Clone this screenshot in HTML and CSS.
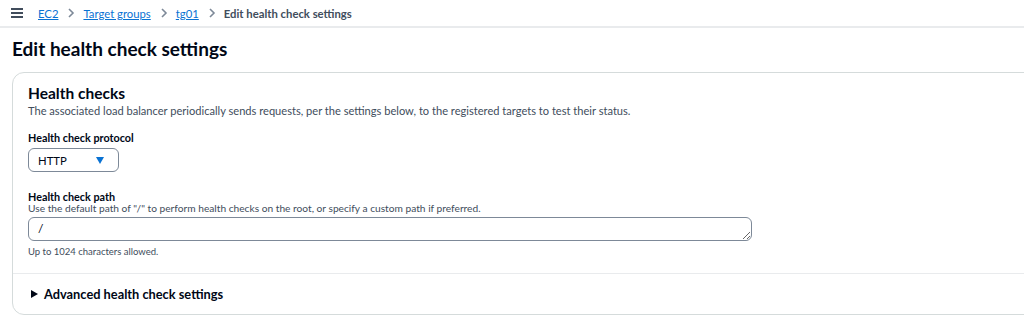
FILE: index.html
```html
<!DOCTYPE html>
<html lang="en">
<head>
    <meta charset="UTF-8">
    <meta name="viewport" content="width=device-width, initial-scale=1.0">
    <title>Edit health check settings</title>
    <link rel="stylesheet" href="styles.css">
</head>
<body>
    <div class="topbar">
        <button class="menu-btn" aria-label="Open navigation">
            <svg width="12" height="10" viewBox="0 0 12 10">
                <rect x="0" y="0" width="12" height="2" fill="#414d5c"/>
                <rect x="0" y="4" width="12" height="2" fill="#414d5c"/>
                <rect x="0" y="8" width="12" height="2" fill="#414d5c"/>
            </svg>
        </button>
        <nav class="breadcrumbs">
            <a href="#">EC2</a>
            <span class="sep"><svg width="8" height="10" viewBox="0 0 8 10"><path d="M2 1l4 4-4 4" fill="none" stroke="#7d8998" stroke-width="1.6"/></svg></span>
            <a href="#">Target groups</a>
            <span class="sep"><svg width="8" height="10" viewBox="0 0 8 10"><path d="M2 1l4 4-4 4" fill="none" stroke="#7d8998" stroke-width="1.6"/></svg></span>
            <a href="#">tg01</a>
            <span class="sep"><svg width="8" height="10" viewBox="0 0 8 10"><path d="M2 1l4 4-4 4" fill="none" stroke="#7d8998" stroke-width="1.6"/></svg></span>
            <span class="current">Edit health check settings</span>
        </nav>
    </div>

    <main class="content">
        <h1>Edit health check settings</h1>

        <section class="panel">
            <div class="panel-body">
                <h2>Health checks</h2>
                <p class="panel-desc">The associated load balancer periodically sends requests, per the settings below, to the registered targets to test their status.</p>

                <div class="field">
                    <label class="field-label">Health check protocol</label>
                    <div class="select">
                        <span>HTTP</span>
                        <svg width="8" height="7" viewBox="0 0 8 7"><path d="M0 0h8L4 7z" fill="#0972d3"/></svg>
                    </div>
                </div>

                <div class="field">
                    <label class="field-label">Health check path</label>
                    <div class="field-desc">Use the default path of "/" to perform health checks on the root, or specify a custom path if preferred.</div>
                    <textarea class="path-input" rows="1">/</textarea>
                    <div class="field-hint">Up to 1024 characters allowed.</div>
                </div>
            </div>

            <div class="panel-footer">
                <svg width="7" height="8" viewBox="0 0 7 8"><path d="M0 0l7 4L0 8z" fill="#000716"/></svg>
                <span>Advanced health check settings</span>
            </div>
        </section>
    </main>
</body>
</html>
```

FILE: styles.css
```css
body {
    margin: 0;
    font-family: Lato, Arial, sans-serif;
    color: #000716;
    background: #ffffff;
    overflow: hidden;
}

.topbar {
    display: flex;
    align-items: center;
    height: 26px;
    padding-left: 11px;
    border-bottom: 2px solid #e9ebed;
}

.menu-btn {
    background: none;
    border: none;
    padding: 0;
    margin-right: 15px;
    display: flex;
    align-items: center;
}

.breadcrumbs {
    display: flex;
    align-items: center;
    font-size: 11.3px;
}

.breadcrumbs a {
    color: #0972d3;
    text-decoration: underline;
}

.breadcrumbs .sep {
    display: flex;
    align-items: center;
    margin: 0 8px 0 9px;
}

.breadcrumbs .current {
    color: #414d5c;
    font-weight: 700;
}

.content {
    padding: 0 0 0 12px;
}

h1 {
    font-size: 19px;
    font-weight: 700;
    margin: 9px 0 11px;
    line-height: 24px;
}

.panel {
    width: calc(100% + 20px);
    border: 1px solid #d5dbdb;
    border-radius: 12px;
    box-sizing: border-box;
}

.panel-body {
    padding: 10px 16px 15px 15px;
    border-bottom: 1px solid #e9ebed;
}

h2 {
    font-size: 15.5px;
    font-weight: 700;
    line-height: 20px;
    margin: 0;
}

.panel-desc {
    font-size: 11.1px;
    color: #414d5c;
    margin: 0 0 11px;
    line-height: 16px;
}

.field {
    margin-bottom: 17px;
}

.field:last-child {
    margin-bottom: 0;
}

.field-label {
    display: block;
    font-size: 10.8px;
    font-weight: 700;
    line-height: 16px;
    margin-bottom: 2px;
}

.select {
    width: 91px;
    height: 24px;
    box-sizing: border-box;
    border: 1px solid #7d8998;
    border-radius: 6px;
    display: flex;
    align-items: center;
    justify-content: space-between;
    padding: 0 14px 0 9px;
    font-size: 11.3px;
}

.field-desc {
    font-size: 10.2px;
    color: #414d5c;
    line-height: 13px;
    margin-top: -5px;
    margin-bottom: 2px;
}

.path-input {
    display: block;
    width: 724px;
    height: 24px;
    box-sizing: border-box;
    border: 1px solid #7d8998;
    border-radius: 6px;
    padding: 3px 9px;
    font-family: inherit;
    font-size: 12px;
    line-height: 16px;
    color: #000716;
    resize: vertical;
    overflow: hidden;
}

.field-hint {
    font-size: 9.5px;
    color: #414d5c;
    line-height: 13px;
    margin-top: 4px;
}

.panel-footer {
    display: flex;
    align-items: center;
    gap: 6px;
    padding: 12px 18px;
    font-size: 12.8px;
    font-weight: 700;
    line-height: 16px;
}
```
